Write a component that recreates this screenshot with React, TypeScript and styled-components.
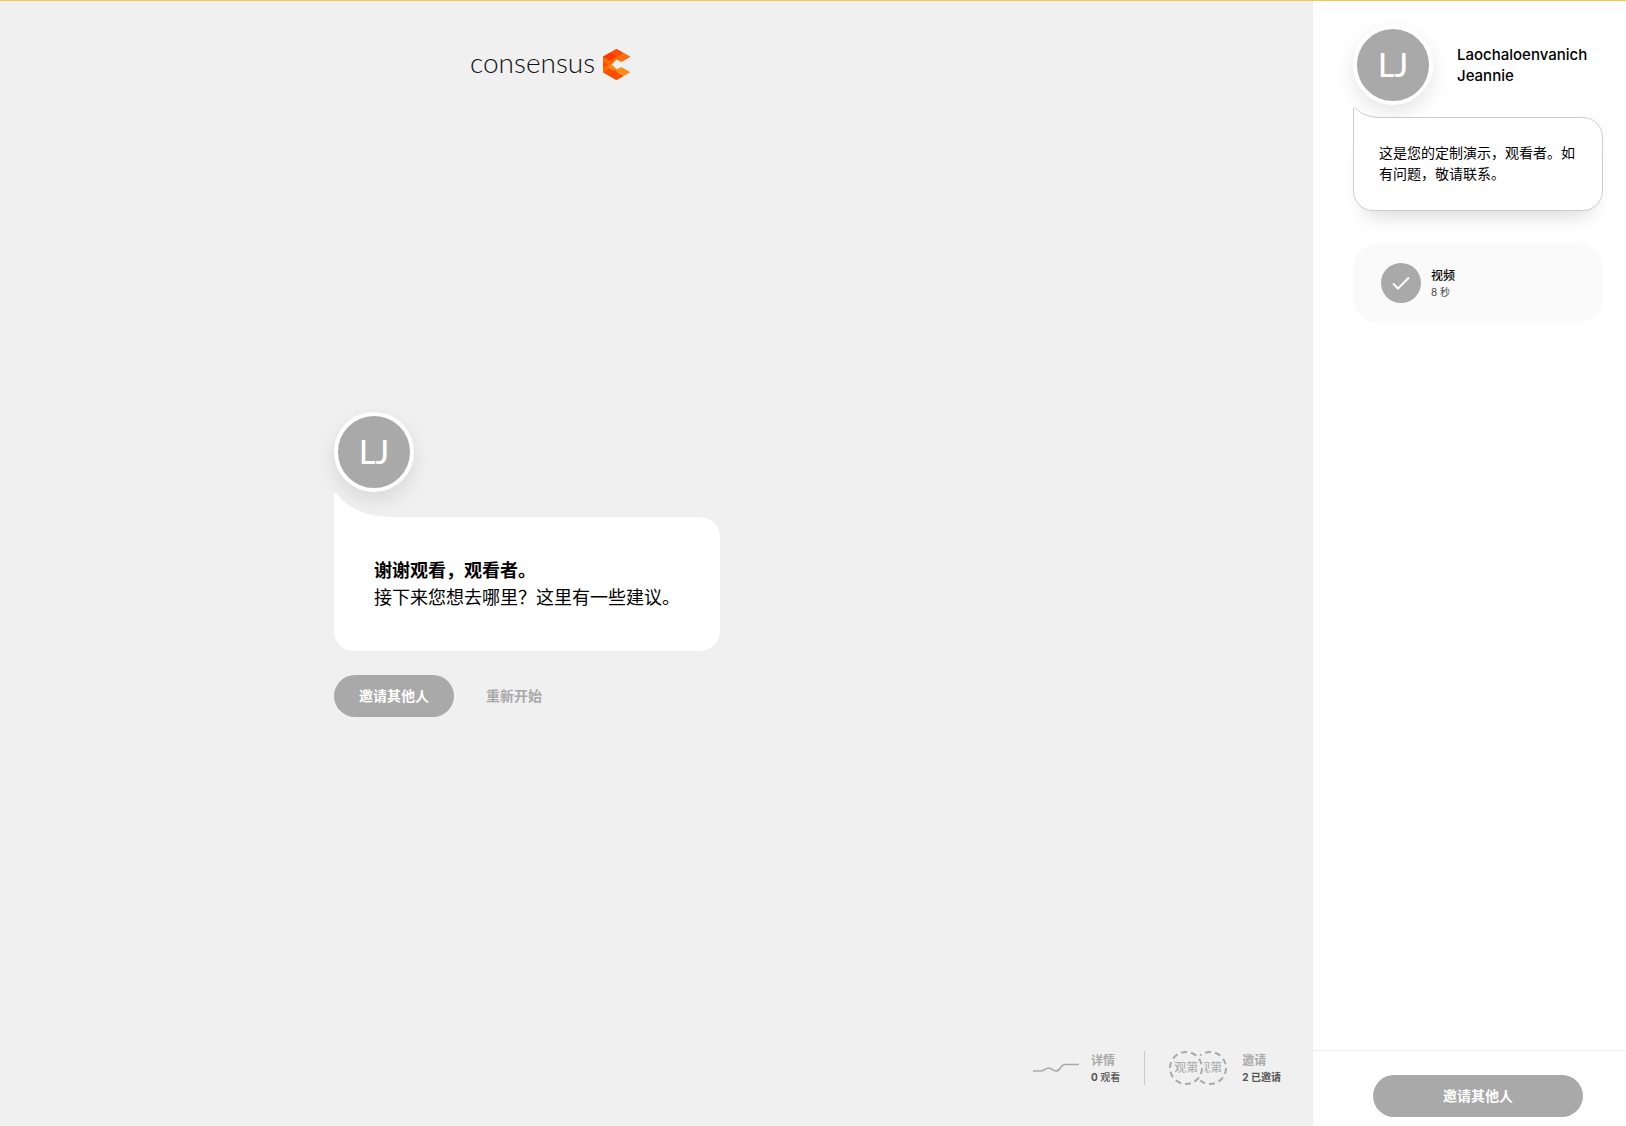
import React from "react";
import styled, { createGlobalStyle } from "styled-components";

const GlobalStyle = createGlobalStyle`
  *, *::before, *::after { box-sizing: border-box; }
  body {
    margin: 0;
    color: #000;
    background: #f0f0f0;
    font-family: Inter, "Noto Sans CJK SC", sans-serif;
    font-size: 14px;
    line-height: 21px;
  }
  button { font-family: inherit; cursor: pointer; }
  h1, h2, p { margin: 0; font-size: inherit; font-weight: inherit; }
`;

const Page = styled.div`
  display: grid;
  grid-template-columns: minmax(0, 1fr) 313px;
  min-height: 100vh;
  border-top: 1px solid #f9c846;
`;

const Main = styled.main`
  display: grid;
  grid-template-rows: 1fr auto 1fr;
  padding: 43px 32px 41px;
`;

const Column = styled.div`
  width: 100%;
  max-width: 645px;
  margin: 0 auto;
`;

const Brand = styled.header`
  display: flex;
  align-items: center;
  justify-content: center;
  gap: 8px;
  width: 67%;
  height: 40px;
  color: #111;
  font-family: Lato, sans-serif;
  font-size: 28px;
  font-weight: 300;
  line-height: 36px;
`;

const BrandName = styled.span`
  padding-bottom: 4px;
`;

const Avatar = styled.div`
  display: flex;
  flex: none;
  align-items: center;
  justify-content: center;
  width: 80px;
  height: 80px;
  border: 4px solid #fff;
  border-radius: 50%;
  background: #a9a9a9;
  box-shadow: 0 8px 20px rgba(0, 0, 0, 0.1);
  color: #fff;
  font-family: Lato, sans-serif;
  font-size: 32px;
  font-weight: 500;
  line-height: 40px;
`;

const Bubble = styled.section<{ $compact?: boolean }>`
  position: relative;
  width: ${(p) => (p.$compact ? "auto" : "fit-content")};
  margin-top: ${(p) => (p.$compact ? 12 : 25)}px;
  padding: ${(p) => (p.$compact ? "24px 25px 26px" : "40px")};
  border: ${(p) => (p.$compact ? "1px solid #ccc" : "0")};
  border-radius: 20px;
  background: #fff;
  box-shadow: ${(p) => (p.$compact ? "0 16px 20px -12px rgba(0, 0, 0, 0.16)" : "none")};
  font-size: ${(p) => (p.$compact ? 14 : 18)}px;
  line-height: ${(p) => (p.$compact ? 21 : 27)}px;
`;

const LargeTail = styled.svg`
  position: absolute;
  left: 0;
  bottom: calc(100% - 24px);
`;

const SmallTail = styled.svg`
  position: absolute;
  left: -1px;
  bottom: calc(100% - 23px);
`;

const Strong = styled.h1`
  font-weight: 700;
`;

const Actions = styled.div`
  display: flex;
  gap: 7px;
  margin-top: 24px;
`;

const Button = styled.button<{ $plain?: boolean; $wide?: boolean }>`
  width: ${(p) => (p.$wide ? "100%" : "auto")};
  height: 42px;
  padding: 0 25px 2px;
  border: 0;
  border-radius: 21px;
  background: ${(p) => (p.$plain ? "transparent" : "#a9a9a9")};
  color: ${(p) => (p.$plain ? "#a9a9a9" : "#fff")};
  font-size: 14px;
  font-weight: 700;
  line-height: 21px;
`;

const Stats = styled.footer`
  display: flex;
  align-self: end;
  align-items: center;
  justify-content: flex-end;
`;

const Stat = styled.button`
  display: flex;
  align-items: center;
  height: 34px;
  padding: 0;
  border: 0;
  background: none;
  text-align: left;

  & + & {
    margin-left: 24px;
    padding-left: 24px;
    border-left: 1px solid #ccc;
  }
`;

const StatText = styled.span`
  display: grid;
  margin-left: 12px;
`;

const StatTitle = styled.span`
  color: #a9a9a9;
  font-size: 12px;
  font-weight: 700;
  line-height: 18px;
`;

const StatValue = styled.span<{ $bold?: boolean }>`
  color: #555;
  font-size: 10px;
  font-weight: ${(p) => (p.$bold ? 700 : 500)};
  line-height: 15px;

  b { font-weight: 700; }
`;

const Viewers = styled.span`
  display: flex;
  margin-right: 3px;
`;

const Viewer = styled.span`
  position: relative;
  display: grid;
  place-items: center;
  width: 34px;
  height: 34px;
  border-radius: 50%;
  background: #f0f0f0;
  color: #a9a9a9;
  font-size: 12px;
  line-height: 18px;

  &:first-child {
    z-index: 1;
    box-shadow: 0 0 0 2px #f0f0f0;
  }
  & + & { margin-left: -10px; }
`;

const Ring = styled.svg`
  position: absolute;
  inset: 0;
`;

const Sidebar = styled.aside`
  display: flex;
  flex-direction: column;
  background: #fff;
`;

const SideContent = styled.div`
  flex: 1;
  padding: 24px 23px 24px 40px;
`;

const Presenter = styled.div`
  display: flex;
  align-items: center;
  gap: 24px;
`;

const PresenterName = styled.h2`
  font-size: 15px;
  font-weight: 500;
`;

const VideoCard = styled.section`
  display: flex;
  align-items: center;
  gap: 10px;
  margin-top: 32px;
  padding: 20px 28px;
  border-radius: 25px;
  background: #fafafa;
`;

const Check = styled.span`
  display: grid;
  place-items: center;
  width: 40px;
  height: 40px;
  border-radius: 50%;
  background: #a9a9a9;
`;

const VideoTitle = styled.h2`
  font-size: 12px;
  font-weight: 500;
  line-height: 18px;
`;

const VideoTime = styled.p`
  color: #444;
  font-size: 10px;
  line-height: 15px;
`;

const SideFooter = styled.div`
  padding: 24px 43px 9px 60px;
  border-top: 1px solid #eee;
`;

const LogoMark = () => (
  <svg width="27" height="31" viewBox="0 0 27 31" aria-hidden="true">
    <path d="M13.5 0 27 7.7 18.5 12.7 13.5 10.5 8.5 15.5 13.5 20.5 18.5 18.3 27 23.3 13.5 31 0 23.3V7.7Z" fill="#ff6a00" />
    <path d="M13.5 0 27 7.7 20.5 11.5 13.500 7.7 6.500 11.500 0 7.7Z" fill="#ff4a00" />
    <path d="M0 7.7 6.500 4 13.500 7.700 6.500 11.500Z" fill="#ff3600" />
    <path d="M13.500 7.700 20.500 4 27 7.700 18.500 12.700Z" fill="#ff6e12" />
    <path d="M0 13 5 15.500 0 18.500Z" fill="#ff4a00" />
    <path d="M5 15.500H8.500L13.500 20.500 6 20Z" fill="#ff8420" />
    <path d="M6 20 13.500 23 20.500 27 13.500 31 0 23.300Z" fill="#ff4d00" />
    <path d="M13.500 20.500 18.500 18.300 27 23.300 20.500 27 13.500 23Z" fill="#ff8d1c" />
  </svg>
);

const ViewerBadge = ({ text }: { text: string }) => (
  <Viewer>
    <Ring width="34" height="34" viewBox="0 0 34 34" aria-hidden="true">
      <circle cx="17" cy="17" r="16" fill="none" stroke="#a9a9a9" strokeWidth="2" strokeDasharray="6 4" />
    </Ring>
    {text}
  </Viewer>
);

export default function App() {
  return (
    <>
      <GlobalStyle />
      <Page>
        <Main>
          <Column>
            <Brand>
              <BrandName>consensus</BrandName>
              <LogoMark />
            </Brand>
          </Column>
          <Column>
            <Avatar>LJ</Avatar>
            <Bubble>
              <LargeTail width="60" height="48" viewBox="0 0 60 48" aria-hidden="true">
                <path d="M0 48V1Q0 0 2 0C13 15 32 24 58 24L40 48Z" fill="#fff" />
              </LargeTail>
              <Strong>谢谢观看，观看者。</Strong>
              <p>接下来您想去哪里？这里有一些建议。</p>
            </Bubble>
            <Actions>
              <Button type="button">邀请其他人</Button>
              <Button type="button" $plain>重新开始</Button>
            </Actions>
          </Column>
          <Stats>
            <Stat type="button">
              <svg width="46" height="10" viewBox="0 0 46 10" fill="none" stroke="#a9a9a9" strokeWidth="1.5" aria-hidden="true">
                <path d="M0 8H8C12 8 12 5 15.500 5C19 5 19 8 23 8C28 8 27 1.500 32 1.500H46" />
              </svg>
              <StatText>
                <StatTitle>详情</StatTitle>
                <StatValue><b>0</b> 观看</StatValue>
              </StatText>
            </Stat>
            <Stat type="button">
              <Viewers>
                <ViewerBadge text="观第" />
                <ViewerBadge text="观第" />
              </Viewers>
              <StatText>
                <StatTitle>邀请</StatTitle>
                <StatValue $bold><b>2</b> 已邀请</StatValue>
              </StatText>
            </Stat>
          </Stats>
        </Main>
        <Sidebar>
          <SideContent>
            <Presenter>
              <Avatar>LJ</Avatar>
              <PresenterName>Laochaloenvanich Jeannie</PresenterName>
            </Presenter>
            <Bubble $compact>
              <SmallTail width="30" height="34" viewBox="0 0 30 34" aria-hidden="true">
                <path d="M0.500 34V1.500Q1 0 3 1.500C9 8 18 10.500 28 10.500L24 20 8 34Z" fill="#fff" />
                <path d="M0.500 34V1.500Q1 0 3 1.500C9 8 18 10.500 28 10.500" fill="none" stroke="#ccc" />
              </SmallTail>
              <p>这是您的定制演示，观看者。如有问题，敬请联系。</p>
            </Bubble>
            <VideoCard>
              <Check>
                <svg width="18" height="14" viewBox="0 0 18 14" fill="none" stroke="#fff" strokeWidth="2" aria-hidden="true">
                  <path d="M1 7.500 6 12.500 17 1.500" />
                </svg>
              </Check>
              <div>
                <VideoTitle>视频</VideoTitle>
                <VideoTime>8 秒</VideoTime>
              </div>
            </VideoCard>
          </SideContent>
          <SideFooter>
            <Button type="button" $wide>邀请其他人</Button>
          </SideFooter>
        </Sidebar>
      </Page>
    </>
  );
}
